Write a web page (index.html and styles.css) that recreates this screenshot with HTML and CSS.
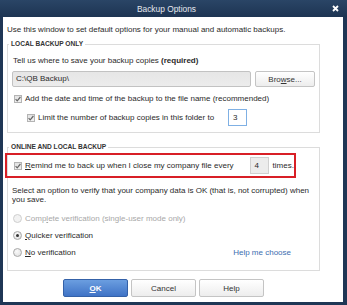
FILE: index.html
```html
<!DOCTYPE html>
<html>
<head>
<meta charset="utf-8">
<link rel="stylesheet" href="styles.css">
</head>
<body>
<div class="win">
  <div class="titlebar">
    <span class="title">Backup Options</span>
    <svg class="close" width="7" height="7" viewBox="0 0 7 7"><path d="M1 1L6 6M6 1L1 6" stroke="#fff" stroke-width="1.8"/></svg>
  </div>
  <div class="content">
    <p class="intro">Use this window to set default options for your manual and automatic backups.</p>
    <fieldset class="group g1">
      <legend>LOCAL BACKUP ONLY</legend>
      <div class="prompt">Tell us where to save your backup copies <b>(required)</b></div>
      <div class="pathrow">
        <div class="pathinput">C:\QB Backup\</div>
        <div class="btn browse">Bro<u>w</u>se...</div>
      </div>
      <div class="chkrow r1">
        <span class="box"><svg width="8" height="8" viewBox="0 0 8 8"><path d="M1.6 4.2L3.2 5.8L6.4 2" fill="none" stroke="#666" stroke-width="1.2"/></svg></span>
        <span>Add the date and time of the backup to the file name (recommended)</span>
      </div>
      <div class="chkrow r2">
        <span class="box"><svg width="8" height="8" viewBox="0 0 8 8"><path d="M1.6 4.2L3.2 5.8L6.4 2" fill="none" stroke="#666" stroke-width="1.2"/></svg></span>
        <span>Limit the number of backup copies in this folder to</span>
        <span class="num focus">3</span>
      </div>
    </fieldset>
    <fieldset class="group g2">
      <legend>ONLINE AND LOCAL BACKUP</legend>
      <div class="remind">
        <span class="box"><svg width="8" height="8" viewBox="0 0 8 8"><path d="M1.6 4.2L3.2 5.8L6.4 2" fill="none" stroke="#666" stroke-width="1.2"/></svg></span>
        <span class="rtext"><u>R</u>emind me to back up when I close my company file every</span>
        <span class="num gray">4</span>
        <span class="times">times.</span>
      </div>
      <p class="select">Select an option to verify that your company data is OK (that is, not corrupted) when you save.</p>
      <div class="radio disabled r-a"><span class="dot"></span><span>Comp<u>l</u>ete verification (single-user mode only)</span></div>
      <div class="radio r-b"><span class="dot on"></span><span><u>Q</u>uicker verification</span></div>
      <div class="radio r-c"><span class="dot"></span><span><u>N</u>o verification</span><span class="help">Help me choose</span></div>
    </fieldset>
    <div class="buttons">
      <div class="btn ok"><u>O</u>K</div>
      <div class="btn">Cancel</div>
      <div class="btn">Help</div>
    </div>
  </div>
</div>
</body>
</html>
```
FILE: styles.css
```css
* { box-sizing: border-box; }
html, body { margin: 0; padding: 0; background: #fff; }
body {
  font-family: "Liberation Sans", Arial, sans-serif;
  font-size: 8px;
  color: #2a2a2a;
}
.win {
  width: 347px;
  height: 305px;
  background: #1f3655;
  display: flex;
  flex-direction: column;
}
.titlebar {
  height: 17px;
  flex: none;
  display: flex;
  align-items: center;
  justify-content: center;
  position: relative;
  background: linear-gradient(#2a4566, #1d3452);
}
.title {
  color: #e4e8ee;
  font-size: 8.4px;
  margin-left: -14px;
}
.close {
  position: absolute;
  right: 8px;
  top: 5px;
}
.content {
  flex: 1;
  margin: 0 4px 3px 3px;
  background: #fff;
  padding-top: 8px;
}
.intro {
  margin: 0 0 0 4px;
  line-height: 10px;
  height: 10px;
  white-space: nowrap;
}
.group {
  margin: 5px 0 0 4px;
  width: 313px;
  border: 1px solid #dcdcdc;
  padding: 0 3px 6px 4px;
  min-width: 0;
}
.group legend {
  font-weight: bold;
  font-size: 6.6px;
  line-height: 8px;
  color: #333;
  padding: 0 2px;
  margin-left: -3px;
}
.prompt {
  margin-top: 8px;
  line-height: 10px;
  padding-left: 1px;
}
.pathrow {
  display: flex;
  gap: 4px;
  margin-top: 5px;
}
.pathinput {
  width: 239px;
  height: 16px;
  border: 1px solid #c2c2c2;
  border-radius: 2px;
  background: linear-gradient(#e6e6e6, #ececec);
  padding-left: 3px;
  line-height: 14px;
}
.btn {
  height: 16px;
  border: 1px solid #c4c4c4;
  border-radius: 2px;
  background: linear-gradient(#ffffff, #ededed);
  display: flex;
  align-items: center;
  justify-content: center;
  color: #333;
}
.browse { width: 60px; }
.chkrow {
  display: flex;
  align-items: center;
  line-height: 10px;
  white-space: nowrap;
}
.box {
  width: 8px;
  height: 8px;
  border: 1px solid #b4b4b4;
  background: linear-gradient(#e2e2e2, #f2f2f2);
  margin-right: 3px;
  display: flex;
  flex: none;
}
.box svg { margin: -1px; }
.r1 { margin-top: 7px; padding-left: 2px; height: 10px; }
.r2 { margin-top: 5px; padding-left: 15px; height: 17px; }
.num {
  width: 19px;
  height: 17px;
  border: 1px solid #c8c8c8;
  padding-left: 4px;
  line-height: 15px;
  flex: none;
}
.r2 .num { margin-left: 14px; }
.num.focus { border-color: #7fb0e4; background: #fff; }
.num.gray { background: #ececec; border-color: #d0d0d0; margin-left: 16px; }
.g1 { padding-bottom: 6px; }
.g2 { margin-top: 10px; padding-bottom: 13px; }
.remind {
  margin: 2px 0 0 -7px;
  width: 291px;
  height: 25px;
  border: 2px solid #d81f26;
  display: flex;
  align-items: center;
  padding-left: 7px;
  white-space: nowrap;
}
.rtext { flex: none; }
.times { margin-left: 4px; }
.select {
  margin: 8px 0 0 0;
  line-height: 9px;
  width: 300px;
}
.radio {
  display: flex;
  align-items: center;
  height: 10px;
  margin-top: 7px;
  padding-left: 1px;
  white-space: nowrap;
}
.r-a { margin-top: 9px; }
.dot {
  width: 9px;
  height: 9px;
  border-radius: 50%;
  border: 1px solid #a8a8a8;
  background: radial-gradient(circle at 40% 35%, #fafafa, #dcdcdc);
  margin-right: 3px;
  flex: none;
  display: flex;
  align-items: center;
  justify-content: center;
}
.dot.on::after {
  content: "";
  width: 3px;
  height: 3px;
  border-radius: 50%;
  background: #333;
}
.disabled { color: #a8a8a8; }
.disabled .dot { border-color: #cfcfcf; background: #f2f2f2; }
.help {
  margin-left: auto;
  margin-right: 25px;
  color: #3d6eb0;
}
.buttons {
  margin: 8px 0 0 4px;
  width: 313px;
  display: flex;
  justify-content: center;
  gap: 3px;
}
.buttons .btn {
  width: 65px;
  height: 18px;
}
.buttons .btn.ok {
  background: linear-gradient(#6b9ee0, #3f73c6);
  border-color: #3461a8;
  color: #fff;
  font-weight: bold;
}
```
